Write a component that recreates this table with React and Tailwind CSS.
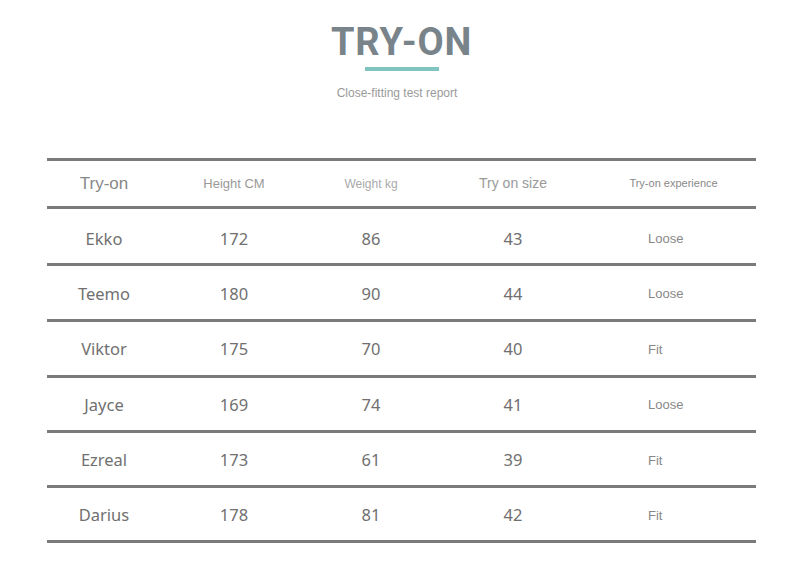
export default function App() {
  const rows = [
    ["Ekko", "172", "86", "43", "Loose"],
    ["Teemo", "180", "90", "44", "Loose"],
    ["Viktor", "175", "70", "40", "Fit"],
    ["Jayce", "169", "74", "41", "Loose"],
    ["Ezreal", "173", "61", "39", "Fit"],
    ["Darius", "178", "81", "42", "Fit"],
  ];
  const heights = ["h-[57px] pt-[6px]", "h-[56px] pt-[3px]", "h-[56px] pt-[2px]", "h-[55px] pt-[2px]", "h-[55px] pt-[3px]", "h-[55px] pt-[3px]"];
  const data = "font-['Noto_Sans',sans-serif] text-[16.5px] text-[#707070]";
  return (
    <div className="w-[790px] h-[575px] bg-white overflow-hidden">
      <div className="flex flex-col items-center pt-[23px]">
        <div className="ml-[13px] font-['Roboto',sans-serif] font-bold text-[38px] leading-none tracking-[0.8px] text-[#78848a]">
          TRY-ON
        </div>
        <div className="mt-[6px] ml-[14px] w-[74px] h-[4px] bg-[#7fc4bf]" />
        <div className="mt-[16px] ml-[4px] font-['Liberation_Sans',sans-serif] text-[12px] leading-none text-[#9a9a9a]">
          Close-fitting test report
        </div>
      </div>
      <div className="ml-[47px] mt-[59px] w-[709px] border-t-[3px] border-[#7b7b7b]">
        <div className="flex h-[48px] items-center border-b-[3px] border-[#7b7b7b]">
          <div className="w-[114px] text-center font-['Liberation_Sans',sans-serif] text-[17px] text-[#888]">Try-on</div>
          <div className="w-[146px] text-center font-['Liberation_Sans',sans-serif] text-[13px] text-[#999]">Height CM</div>
          <div className="w-[128px] text-center font-['Liberation_Sans',sans-serif] text-[12px] text-[#aaa]">Weight kg</div>
          <div className="w-[156px] text-center font-['Liberation_Sans',sans-serif] text-[14px] text-[#999]">Try on size</div>
          <div className="w-[165px] text-center font-['Liberation_Sans',sans-serif] text-[11px] text-[#888]">Try-on experience</div>
        </div>
        {rows.map((r, i) => (
          <div key={i} className={`flex ${heights[i]} items-center border-b-[3px] border-[#7b7b7b]`}>
            <div className={`w-[114px] text-center ${data}`}>{r[0]}</div>
            <div className={`w-[146px] text-center ${data}`}>{r[1]}</div>
            <div className={`w-[128px] text-center ${data}`}>{r[2]}</div>
            <div className={`w-[156px] text-center ${data}`}>{r[3]}</div>
            <div className="w-[165px] pl-[57px] font-['Liberation_Sans',sans-serif] text-[13px] text-[#888]">{r[4]}</div>
          </div>
        ))}
      </div>
    </div>
  );
}
